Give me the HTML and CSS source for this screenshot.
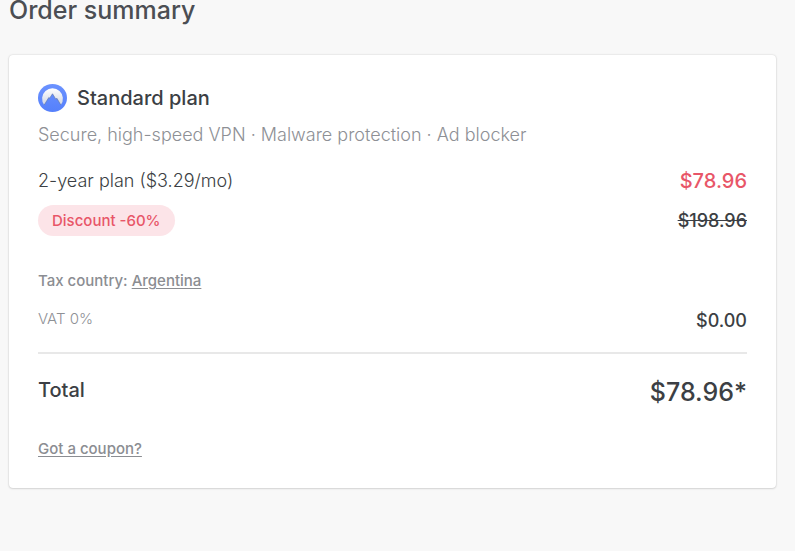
FILE: index.html
```html
<!DOCTYPE html>
<html lang="en">
<head>
<meta charset="utf-8">
<meta name="viewport" content="width=device-width, initial-scale=1">
<title>Order summary</title>
<link rel="stylesheet" href="styles.css">
</head>
<body>
<main class="page">
  <h1 class="page-title">Order summary</h1>
  <section class="card">
    <div class="plan">
      <svg class="plan-logo" viewBox="0 0 29 29" aria-hidden="true">
        <defs>
          <linearGradient id="badge" x1="0" y1="0" x2="0" y2="1">
            <stop offset="0" stop-color="#6b92ff"/>
            <stop offset="1" stop-color="#5580fb"/>
          </linearGradient>
          <linearGradient id="sky" x1="0" y1="0" x2="0" y2="1">
            <stop offset="0" stop-color="#fff"/>
            <stop offset="1" stop-color="#cfd5e4"/>
          </linearGradient>
        </defs>
        <ellipse cx="14.5" cy="14" rx="14.5" ry="14" fill="url(#badge)"/>
        <path d="M6.2 21A10.4 10.4 0 1 1 22.8 21L18.9 14.3L17.8 15.2L14.5 9.8L11.7 14.2L10.8 13.5Z" fill="url(#sky)"/>
        <path d="M6.2 21L10.8 13.5L11.7 14.2L14.5 9.8L17.8 15.2L18.9 14.3L22.8 21" fill="none" stroke="#6078ae" stroke-width=".7"/>
      </svg>
      <h2 class="label-strong">Standard plan</h2>
    </div>
    <p class="features">Secure, high-speed VPN · Malware protection · Ad blocker</p>
    <div class="row row-plan">
      <span class="term">2-year plan ($3.29/mo)</span>
      <span class="price price-sale">$78.96</span>
    </div>
    <div class="row row-discount">
      <span class="pill">Discount -60%</span>
      <s class="price">$198.96</s>
    </div>
    <p class="tax">Tax country: <a class="link" href="#country">Argentina</a></p>
    <div class="row row-vat">
      <span class="vat">VAT 0%</span>
      <span class="price price-vat">$0.00</span>
    </div>
    <hr class="divider">
    <div class="row row-total">
      <span class="label-strong">Total</span>
      <span class="price price-total">$78.96*</span>
    </div>
    <p class="coupon"><a class="link" href="#coupon">Got a coupon?</a></p>
  </section>
</main>
</body>
</html>
```
FILE: styles.css
```css
* {
  box-sizing: border-box;
}

body {
  margin: 0;
  background: #f8f8f8;
  color: #3c3f44;
  font-family: Inter, "Liberation Sans", sans-serif;
}

h1, h2, p {
  margin: 0;
}

.page {
  padding: 0 19px 32px 9px;
}

.page-title {
  color: #4b4e53;
  font-size: 25px;
  font-weight: 500;
  line-height: 20px;
}

.card {
  margin-top: 35px;
  padding: 29px 29px 27px;
  border-radius: 4px;
  background: #fff;
  box-shadow: 0 0 2px rgba(0, 0, 0, .18), 0 1px 2px rgba(0, 0, 0, .1);
}

.plan {
  display: flex;
  align-items: flex-start;
  gap: 10px;
}

.plan-logo {
  width: 29px;
  height: 29px;
}

.label-strong {
  font-size: 20px;
  font-weight: 500;
  line-height: 28px;
}

.features {
  margin-top: 10px;
  color: #8e9095;
  font-size: 18px;
  font-weight: 300;
  line-height: 24px;
}

.row {
  display: flex;
  align-items: center;
  justify-content: space-between;
}

.row-plan {
  margin-top: 20px;
}

.term {
  font-size: 18px;
  font-weight: 300;
  line-height: 28px;
}

.price {
  font-size: 18px;
  font-weight: 500;
  line-height: 24px;
}

.price-sale {
  color: #e85668;
  font-size: 20px;
}

.row-discount {
  margin-top: 10px;
}

.pill {
  padding: 0 14px;
  border-radius: 16px;
  background: #fce4e8;
  color: #e85668;
  font-size: 15px;
  font-weight: 500;
  line-height: 31px;
}

.tax {
  margin-top: 33px;
}

.tax,
.coupon {
  color: #8b8d92;
  font-size: 15px;
  font-weight: 500;
  line-height: 24px;
}

.row-vat,
.row-total {
  align-items: flex-start;
}

.row-vat {
  margin-top: 14px;
}

.vat {
  color: #8e9095;
  font-size: 15px;
  font-weight: 300;
  line-height: 24px;
}

.price-vat {
  line-height: 28px;
}

.link {
  color: inherit;
  text-underline-offset: 2px;
}

.divider {
  height: 2px;
  margin: 17px 0 22px;
  border: 0;
  background: #e8e8e8;
}

.price-total {
  font-size: 25px;
  line-height: 32px;
}

.coupon {
  margin-top: 29px;
}
```
